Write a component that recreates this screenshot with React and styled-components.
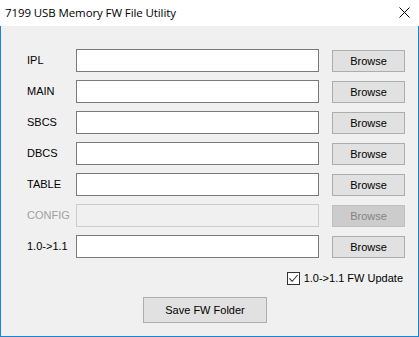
import React from "react";
import styled, { createGlobalStyle } from "styled-components";

const Global = createGlobalStyle`
  html, body { margin: 0; padding: 0; background: #ffffff; }
  * { box-sizing: border-box; }
`;

const Window = styled.div`
  width: 419px;
  height: 337px;
  display: flex;
  flex-direction: column;
  font-family: "Liberation Sans", Arial, sans-serif;
  font-size: 11px;
  color: #000;
`;

const TitleBar = styled.div`
  height: 26px;
  background: #ffffff;
  display: flex;
  align-items: center;
  justify-content: space-between;
  padding: 0 9px 1px 5px;
`;

const Title = styled.div`
  font-family: "Open Sans", "Noto Sans", sans-serif;
  font-size: 11.5px;
  color: #000;
  letter-spacing: -0.1px;
`;

const Close = styled.svg`
  width: 11px;
  height: 11px;
`;

const Body = styled.div`
  flex: 1;
  background: #f0f0f0;
  border: 1px solid #1883d7;
  border-top: none;
  padding: 23px 0 0 26px;
  display: flex;
  flex-direction: column;
`;

const Rows = styled.div`
  display: grid;
  grid-template-columns: 36px 243px 73px;
  column-gap: 13px;
  row-gap: 8px;
  grid-auto-rows: 23px;
  align-items: center;
`;

const Label = styled.div`
  color: ${(p) => (p.$disabled ? "#a0a0a0" : "#000")};
  margin-top: -2px;
  white-space: nowrap;
`;

const Field = styled.div`
  height: 23px;
  background: ${(p) => (p.$disabled ? "#f0f0f0" : "#ffffff")};
  border: 1px solid ${(p) => (p.$disabled ? "#cccccc" : "#7a7a7a")};
`;

const Button = styled.div`
  height: 22px;
  margin-top: 1px;
  display: flex;
  align-items: center;
  justify-content: center;
  background: ${(p) => (p.$disabled ? "#cccccc" : "#e1e1e1")};
  border: 1px solid ${(p) => (p.$disabled ? "#bfbfbf" : "#adadad")};
  color: ${(p) => (p.$disabled ? "#838383" : "#000")};
  padding-bottom: 1px;
`;

const CheckRow = styled.div`
  display: flex;
  justify-content: flex-end;
  align-items: center;
  gap: 4px;
  margin-top: 13px;
  padding-right: 15px;
  height: 14px;
`;

const CheckBox = styled.div`
  width: 13px;
  height: 13px;
  background: #ffffff;
  border: 1px solid #333333;
  display: flex;
  align-items: center;
  justify-content: center;
`;

const SaveRow = styled.div`
  display: flex;
  margin-top: 12px;
  padding-left: 116px;
`;

const SaveButton = styled(Button)`
  width: 124px;
  height: 26px;
  margin-top: 0;
`;

const rows = [
  { label: "IPL" },
  { label: "MAIN" },
  { label: "SBCS" },
  { label: "DBCS" },
  { label: "TABLE" },
  { label: "CONFIG", disabled: true },
  { label: "1.0->1.1" },
];

export default function App() {
  return (
    <>
      <Global />
      <Window>
        <TitleBar>
          <Title>7199 USB Memory FW File Utility</Title>
          <Close viewBox="0 0 11 11">
            <path d="M0.5 0.5 L10.5 10.5 M10.5 0.5 L0.5 10.5" stroke="#000" strokeWidth="1" fill="none" />
          </Close>
        </TitleBar>
        <Body>
          <Rows>
            {rows.map((r) => (
              <React.Fragment key={r.label}>
                <Label $disabled={r.disabled}>{r.label}</Label>
                <Field $disabled={r.disabled} />
                <Button $disabled={r.disabled}>Browse</Button>
              </React.Fragment>
            ))}
          </Rows>
          <CheckRow>
            <CheckBox>
              <svg width="11" height="11" viewBox="0 0 11 11">
                <path d="M1.5 5.5 L4.2 8.3 L9.6 2" stroke="#333" strokeWidth="1.1" fill="none" />
              </svg>
            </CheckBox>
            <span>1.0-&gt;1.1 FW Update</span>
          </CheckRow>
          <SaveRow>
            <SaveButton>Save FW Folder</SaveButton>
          </SaveRow>
        </Body>
      </Window>
    </>
  );
}
